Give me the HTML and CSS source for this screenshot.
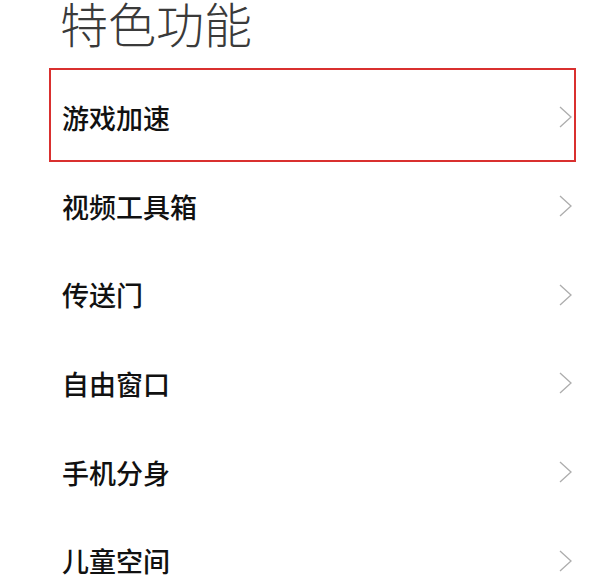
FILE: index.html
```html
<!DOCTYPE html>
<html lang="zh-CN">
<head>
<meta charset="utf-8">
<title>特色功能</title>
<link rel="stylesheet" href="styles.css">
</head>
<body>
<header class="header"><h1 class="title">特色功能</h1></header>
<ul class="list">
  <li class="item item-active"><span class="label">游戏加速</span><svg class="chev" viewBox="0 0 13 22" width="13" height="22"><polyline points="1,1 12,11 1,21"/></svg></li>
  <li class="item"><span class="label">视频工具箱</span><svg class="chev" viewBox="0 0 13 22" width="13" height="22"><polyline points="1,1 12,11 1,21"/></svg></li>
  <li class="item"><span class="label">传送门</span><svg class="chev" viewBox="0 0 13 22" width="13" height="22"><polyline points="1,1 12,11 1,21"/></svg></li>
  <li class="item"><span class="label">自由窗口</span><svg class="chev" viewBox="0 0 13 22" width="13" height="22"><polyline points="1,1 12,11 1,21"/></svg></li>
  <li class="item"><span class="label">手机分身</span><svg class="chev" viewBox="0 0 13 22" width="13" height="22"><polyline points="1,1 12,11 1,21"/></svg></li>
  <li class="item"><span class="label">儿童空间</span><svg class="chev" viewBox="0 0 13 22" width="13" height="22"><polyline points="1,1 12,11 1,21"/></svg></li>
</ul>
</body>
</html>
```
FILE: styles.css
```css
html, body {
  margin: 0;
  padding: 0;
  background: #ffffff;
  overflow: hidden;
}
body {
  width: 606px;
  height: 582px;
  font-family: "Noto Sans CJK SC", "Noto Sans", sans-serif;
}
.header {
  height: 68px;
  padding-left: 60px;
  box-sizing: border-box;
}
.title {
  margin: 0;
  font-size: 48px;
  line-height: 44px;
  font-weight: 300;
  color: #3a3a3a;
}
.list {
  list-style: none;
  margin: 0 0 0 49px;
  padding: 0;
  width: 527px;
}
.item {
  display: flex;
  align-items: center;
  justify-content: space-between;
  height: 88.6px;
  padding: 0 4px 0 13px;
  box-sizing: border-box;
}
.item-active {
  height: 94px;
  padding: 4px 2px 0 11px;
  border: 2px solid #d9302f;
}
.label {
  font-size: 27px;
  font-weight: 500;
  color: #111111;
  line-height: 1;
}
.chev {
  display: block;
}
.chev polyline {
  fill: none;
  stroke: #adadad;
  stroke-width: 1.3;
}
```
